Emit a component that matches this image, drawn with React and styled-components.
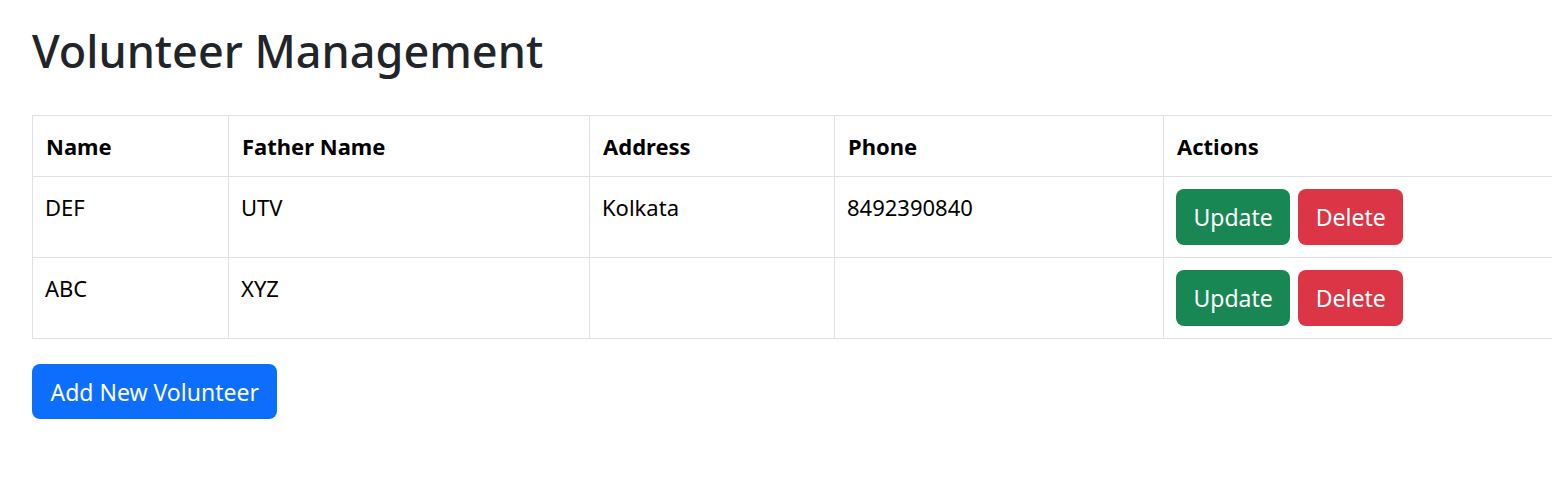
import React from 'react';
import styled, { createGlobalStyle } from 'styled-components';

const GlobalStyle = createGlobalStyle`
  body {
    margin: 0;
    overflow: hidden;
    background: #fff;
    font-family: "Noto Sans", "Open Sans", sans-serif;
  }
`;

const Page = styled.div`
  padding: 16px 0 0 32px;
`;

const Title = styled.h1`
  margin: 0 0 29px;
  font-size: 45px;
  font-weight: 500;
  line-height: 70px;
  color: #212529;
`;

const Table = styled.table`
  border-collapse: collapse;
  table-layout: fixed;
  width: 1580px;
  color: #000;
  font-size: 22px;
`;

const HeadCell = styled.th`
  border: 1px solid #dee2e6;
  padding: 12px 13px;
  line-height: 36px;
  text-align: left;
  font-weight: 700;
  vertical-align: top;
`;

const Cell = styled.td`
  border: 1px solid #dee2e6;
  padding: 12px 12px;
  line-height: 36px;
  vertical-align: top;
`;

const Actions = styled.div`
  display: flex;
  gap: 8px;
`;

const Button = styled.button`
  border: none;
  border-radius: 8px;
  padding: 0 ${(p) => (p.$wide ? 18.5 : 17.5)}px;
  height: ${(p) => (p.$wide ? 55 : 56)}px;
  font-family: inherit;
  font-size: 23px;
  color: #fff;
  background: ${(p) => p.$color};
  cursor: pointer;
`;

const AddButton = styled(Button)`
  margin-top: 25px;
`;

const volunteers = [
  { id: 1, name: 'DEF', father: 'UTV', address: 'Kolkata', phone: '8492390840' },
  { id: 2, name: 'ABC', father: 'XYZ', address: '', phone: '' },
];

const App = () => (
  <Page>
    <GlobalStyle />
    <Title>Volunteer Management</Title>
    <Table>
      <colgroup>
        <col style={{ width: 196 }} />
        <col style={{ width: 361 }} />
        <col style={{ width: 245 }} />
        <col style={{ width: 329 }} />
        <col />
      </colgroup>
      <thead>
        <tr>
          <HeadCell>Name</HeadCell>
          <HeadCell>Father Name</HeadCell>
          <HeadCell>Address</HeadCell>
          <HeadCell>Phone</HeadCell>
          <HeadCell>Actions</HeadCell>
        </tr>
      </thead>
      <tbody>
        {volunteers.map((v) => (
          <tr key={v.id}>
            <Cell>{v.name}</Cell>
            <Cell>{v.father}</Cell>
            <Cell>{v.address}</Cell>
            <Cell>{v.phone}</Cell>
            <Cell>
              <Actions>
                <Button $color="#198754">Update</Button>
                <Button $color="#dc3545">Delete</Button>
              </Actions>
            </Cell>
          </tr>
        ))}
      </tbody>
    </Table>
    <AddButton $color="#0d6efd" $wide>Add New Volunteer</AddButton>
  </Page>
);

export default App;
